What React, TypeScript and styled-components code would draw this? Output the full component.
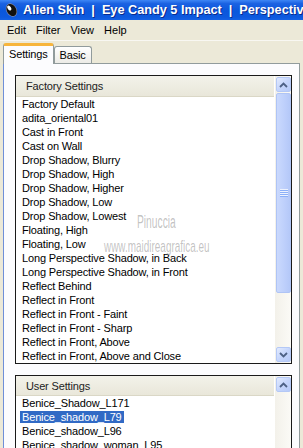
import styled, { createGlobalStyle } from 'styled-components';

const GlobalStyle = createGlobalStyle`
  html, body {
    margin: 0;
    padding: 0;
    background: #ECE9D8;
    overflow: hidden;
  }
  body {
    font-family: "Liberation Sans", Arial, sans-serif;
    font-size: 11px;
    color: #000;
  }
`;

const factoryItems = [
  'Factory Default',
  'adita_oriental01',
  'Cast in Front',
  'Cast on Wall',
  'Drop Shadow, Blurry',
  'Drop Shadow, High',
  'Drop Shadow, Higher',
  'Drop Shadow, Low',
  'Drop Shadow, Lowest',
  'Floating, High',
  'Floating, Low',
  'Long Perspective Shadow, in Back',
  'Long Perspective Shadow, in Front',
  'Reflect Behind',
  'Reflect in Front',
  'Reflect in Front - Faint',
  'Reflect in Front - Sharp',
  'Reflect in Front, Above',
  'Reflect in Front, Above and Close',
];

const userItems = [
  'Benice_Shadow_L171',
  'Benice_shadow_L79',
  'Benice_shadow_L96',
  'Benice_shadow_woman_L95',
  'Benice_shadow_woman_L96',
];

function ArrowIcon({ up }: { up?: boolean }) {
  return (
    <svg width="9" height="6" viewBox="0 0 9 6">
      <path
        d={up ? 'M1 5 L4.5 1.5 L8 5' : 'M1 1 L4.5 4.5 L8 1'}
        fill="none"
        stroke="#4D6185"
        strokeWidth="1.8"
      />
    </svg>
  );
}

function Grip() {
  return (
    <svg width="8" height="8" viewBox="0 0 8 8">
      {[0, 2, 4, 6].map((y) => (
        <line key={y} x1="0" y1={y + 0.5} x2="8" y2={y + 0.5} stroke="#EEF3FE" />
      ))}
      {[1, 3, 5, 7].map((y) => (
        <line key={y} x1="0" y1={y + 0.5} x2="8" y2={y + 0.5} stroke="#8CB0F8" />
      ))}
    </svg>
  );
}

function AlienLogo() {
  return (
    <LogoBox>
      <svg width="14" height="16" viewBox="0 0 14 16">
        <ellipse cx="7.5" cy="8" rx="5.2" ry="7" transform="rotate(-28 7.5 8)" fill="#8A8FA8" />
        <ellipse cx="7.5" cy="8" rx="4.6" ry="6.4" transform="rotate(-28 7.5 8)" fill="#111" />
        <ellipse cx="5.3" cy="6" rx="1.7" ry="2.8" transform="rotate(-35 5.3 6)" fill="#fff" />
      </svg>
    </LogoBox>
  );
}

function ScrollBar({ thumb, down = true }: { thumb?: number; down?: boolean }) {
  return (
    <Scroll>
      <ScrollButton><ArrowIcon up /></ScrollButton>
      {thumb ? (
        <Thumb $height={thumb}><Grip /></Thumb>
      ) : null}
      <Track />
      {down && <ScrollButton><ArrowIcon /></ScrollButton>}
    </Scroll>
  );
}

function App() {
  return (
    <>
      <GlobalStyle />
      <Window>
        <TitleBar>
          <AlienLogo />
          <TitleSegments>
            <TitleText>Alien Skin</TitleText>
            <TitleText>|</TitleText>
            <TitleText>Eye Candy 5 Impact</TitleText>
            <TitleText>|</TitleText>
            <TitleText>Perspective Shadow</TitleText>
          </TitleSegments>
        </TitleBar>

        <MenuBar>
          <MenuItem>Edit</MenuItem>
          <MenuItem>Filter</MenuItem>
          <MenuItem>View</MenuItem>
          <MenuItem>Help</MenuItem>
        </MenuBar>

        <TabStrip>
          <Tab $active>Settings</Tab>
          <Tab>Basic</Tab>
        </TabStrip>

        <Panel>
          <ListBox $height={289}>
            <ListContent>
              <ListHeader $height={21}>Factory Settings</ListHeader>
              {factoryItems.map((item) => (
                <ListItem key={item}><ItemLabel>{item}</ItemLabel></ListItem>
              ))}
            </ListContent>
            <ScrollBar thumb={200} />
          </ListBox>

          <ListBox $height={120}>
            <ListContent>
              <ListHeader $height={20}>User Settings</ListHeader>
              {userItems.map((item) => (
                <ListItem key={item}>
                  <ItemLabel $selected={item === 'Benice_shadow_L79'}>{item}</ItemLabel>
                </ListItem>
              ))}
            </ListContent>
            <ScrollBar down={false} />
          </ListBox>
        </Panel>

        <WatermarkName>Pinuccia</WatermarkName>
        <WatermarkSite>www.maidireagrafica.eu</WatermarkSite>
      </Window>
    </>
  );
}
export default App;

const Window = styled.div`
  position: relative;
  width: 303px;
  height: 448px;
  overflow: hidden;
  display: flex;
  flex-direction: column;
  background: #ECE9D8;
`;

const TitleBar = styled.div`
  height: 20px;
  flex-shrink: 0;
  display: flex;
  align-items: center;
  gap: 5px;
  padding-left: 4px;
  background: linear-gradient(to bottom, #3D86F5 0%, #1B62E2 18%, #0A57DC 55%, #0D59DE 85%, #1461E4 100%);
  overflow: hidden;
`;

const LogoBox = styled.div`
  flex-shrink: 0;
  width: 14px;
  height: 16px;
  display: flex;
`;

const TitleSegments = styled.div`
  display: flex;
  flex-shrink: 0;
  gap: 7px;
  white-space: nowrap;
`;

const TitleText = styled.span`
  color: #fff;
  font-weight: bold;
  font-size: 12.7px;
  line-height: 20px;
  text-shadow: 1px 1px 0 #0B2A8C;
`;

const MenuBar = styled.div`
  height: 20px;
  flex-shrink: 0;
  display: flex;
  align-items: center;
  padding-left: 2px;
  border-bottom: 1px solid #F8F7F2;
`;

const MenuItem = styled.span`
  padding: 0 5px;
  font-size: 11px;
  line-height: 20px;
`;

const TabStrip = styled.div`
  height: 20px;
  margin-top: 2px;
  flex-shrink: 0;
  display: flex;
  align-items: flex-end;
  padding-left: 3px;
`;

const Tab = styled.div<{ $active?: boolean }>`
  position: relative;
  z-index: 1;
  box-sizing: border-box;
  padding: 0 5px;
  letter-spacing: -0.15px;
  font-size: 11px;
  border: 1px solid #919B9C;
  border-bottom: none;
  border-radius: 3px 3px 0 0;
  height: ${(p) => (p.$active ? '21px' : '17px')};
  margin-bottom: ${(p) => (p.$active ? '-1px' : '0')};
  line-height: 16px;
  background: ${(p) => (p.$active ? '#FCFCFE' : 'linear-gradient(to bottom, #FFFFFF, #ECEBE6)')};
  border-top: ${(p) => (p.$active ? '3px solid #F7B53C' : '1px solid #919B9C')};
`;

const Panel = styled.div`
  flex: 1;
  margin: 0 3px 0 3px;
  padding: 11px 7px 0 11px;
  border: 1px solid #919B9C;
  border-left-color: #6F8FD8;
  border-bottom: none;
  background: #FCFCFE;
  display: flex;
  flex-direction: column;
  gap: 11px;
`;

const ListBox = styled.div<{ $height: number }>`
  box-sizing: border-box;
  height: ${(p) => p.$height}px;
  flex-shrink: 0;
  border: 1px solid #1A1A1A;
  background: #fff;
  display: flex;
`;

const ListContent = styled.div`
  flex: 1;
  min-width: 0;
  display: flex;
  flex-direction: column;
  overflow: hidden;
`;

const ListHeader = styled.div<{ $height: number }>`
  box-sizing: border-box;
  height: ${(p) => p.$height}px;
  flex-shrink: 0;
  padding-left: 10px;
  display: flex;
  align-items: center;
  font-size: 11px;
  letter-spacing: -0.15px;
  color: #222;
  background: linear-gradient(to bottom, #F3F2EA, #E9E7DA);
  border-bottom: 1px solid #DAD7C6;
  margin-right: 1px;
`;

const ListItem = styled.div`
  height: 14px;
  flex-shrink: 0;
  padding-left: 4px;
  line-height: 14px;
  white-space: nowrap;
`;

const ItemLabel = styled.span<{ $selected?: boolean }>`
  padding: 0 2px;
  font-size: 11px;
  letter-spacing: -0.15px;
  background: ${(p) => (p.$selected ? '#316AC5' : 'transparent')};
  color: ${(p) => (p.$selected ? '#fff' : '#000')};
`;

const Scroll = styled.div`
  width: 16px;
  flex-shrink: 0;
  box-sizing: border-box;
  padding: 1px 0 1px 1px;
  display: flex;
  flex-direction: column;
  background: linear-gradient(to right, #F3F1EA, #FBFAF6);
`;

const ScrollButton = styled.div`
  box-sizing: border-box;
  height: 15px;
  flex-shrink: 0;
  border: 1px solid #B4C8F6;
  border-radius: 2px;
  background: linear-gradient(135deg, #E3EBFE 0%, #C6D6FC 50%, #B6CAF8 100%);
  display: flex;
  align-items: center;
  justify-content: center;
`;

const Thumb = styled.div<{ $height: number }>`
  box-sizing: border-box;
  height: ${(p) => p.$height}px;
  margin-top: 1px;
  flex-shrink: 0;
  border: 1px solid #AFC4F5;
  border-radius: 2px;
  background: linear-gradient(to right, #CAD9FD, #BDCFFB 60%, #B4C8F8);
  display: flex;
  align-items: center;
  justify-content: center;
`;

const Track = styled.div`
  flex: 1;
`;

const WatermarkName = styled.span`
  position: absolute;
  left: 137px;
  top: 213px;
  font-size: 18px;
  line-height: 18px;
  color: rgba(120, 120, 120, 0.45);
  transform: scaleX(0.57);
  transform-origin: left top;
  white-space: nowrap;
  pointer-events: none;
`;

const WatermarkSite = styled.span`
  position: absolute;
  left: 104px;
  top: 238px;
  font-size: 17px;
  line-height: 17px;
  color: rgba(120, 120, 120, 0.45);
  transform: scaleX(0.585);
  transform-origin: left top;
  white-space: nowrap;
  pointer-events: none;
`;
